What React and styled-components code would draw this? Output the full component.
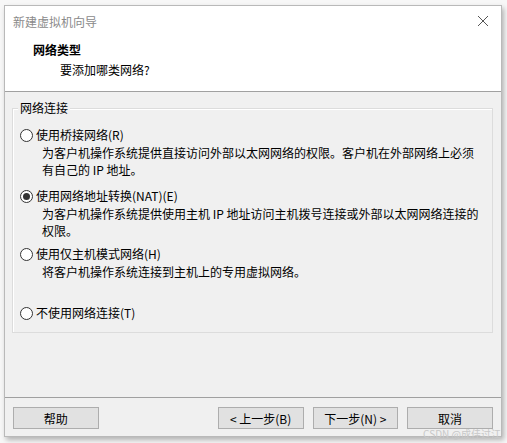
import React from "react";
import styled, { createGlobalStyle } from "styled-components";

const Global = createGlobalStyle`
  html, body { margin: 0; padding: 0; background: #f7f7f7; }
  body { font-family: "Microsoft YaHei", "Noto Sans CJK SC", "Noto Sans", sans-serif; font-size: 12px; color: #000; }
  * { box-sizing: border-box; }
`;

const Page = styled.div`
  width: 507px;
  height: 443px;
  padding: 5px 5px 0 4px;
  position: relative;
  overflow: hidden;
`;

const Window = styled.div`
  width: 498px;
  height: 432px;
  border: 1px solid #b9b9b9;
  background: #f0f0f0;
  box-shadow: 2px 3px 5px rgba(0,0,0,0.28);
  display: flex;
  flex-direction: column;
`;

const TopArea = styled.div`
  background: #fff;
  height: 86px;
  border-bottom: 1px solid #a0a0a0;
  display: flex;
  flex-direction: column;
`;

const TitleBar = styled.div`
  height: 30px;
  display: flex;
  align-items: center;
  justify-content: space-between;
  padding: 0 12px 0 8px;
`;

const Title = styled.span`
  color: #8a8a8a;
  font-size: 12px;
`;

const Close = styled.svg`
  width: 12px;
  height: 12px;
`;

const Header = styled.div`
  padding: 5px 0 0 28px;
  display: flex;
  flex-direction: column;
  gap: 2px;
`;

const HeaderTitle = styled.div`
  font-weight: bold;
  font-size: 12px;
  line-height: 18px;
`;

const HeaderSub = styled.div`
  padding-left: 27px;
  line-height: 18px;
`;

const Body = styled.div`
  padding: 16px 8px 0 7px;
  display: flex;
  flex-direction: column;
`;

const Group = styled.fieldset`
  margin: 0;
  padding: 0 0 0 8px;
  height: 225px;
  border: none;
  box-shadow: inset 0 0 0 1px #dcdcdc, inset 1px 1px 0 1px #fff;
  position: relative;
`;

const Legend = styled.div`
  position: absolute;
  top: -9px;
  left: 6px;
  padding: 0 2px;
  background: #f0f0f0;
  line-height: 18px;
`;

const Options = styled.div`
  padding-top: 18px;
  display: flex;
  flex-direction: column;
`;

const Option = styled.div`
  display: flex;
  flex-direction: column;
  margin-bottom: ${p => p.$mb}px;
`;

const RadioRow = styled.label`
  display: flex;
  align-items: center;
  gap: 3px;
  line-height: 18px;
`;

const Radio = styled.span`
  width: 13px;
  height: 13px;
  border-radius: 50%;
  border: 1px solid #333;
  background: #fff;
  display: flex;
  align-items: center;
  justify-content: center;
  &::after {
    content: "";
    width: 7px;
    height: 7px;
    border-radius: 50%;
    background: ${p => (p.$checked ? "#333" : "transparent")};
  }
`;

const Desc = styled.div`
  padding-left: 22px;
  line-height: 17px;
  width: 460px;
`;

const Footer = styled.div`
  margin-top: 64px;
  border-top: 1px solid #a0a0a0;
  padding: 9px 8px 0 8px;
  display: flex;
`;

const Button = styled.div`
  width: 86px;
  height: 22px;
  border: 1px solid #adadad;
  background: #e1e1e1;
  display: flex;
  align-items: center;
  justify-content: center;
  margin-left: ${p => p.$ml || 0}px;
`;

const Watermark = styled.div`
  position: absolute;
  right: 6px;
  bottom: 4px;
  color: #c8c8c8;
  font-size: 10px;
  line-height: 11px;
`;

export default function App() {
  return (
    <>
      <Global />
      <Page>
        <Window>
          <TopArea>
            <TitleBar>
              <Title>新建虚拟机向导</Title>
              <Close viewBox="0 0 12 12">
                <path d="M1 1L11 11M11 1L1 11" stroke="#555" strokeWidth="1" />
              </Close>
            </TitleBar>
            <Header>
              <HeaderTitle>网络类型</HeaderTitle>
              <HeaderSub>要添加哪类网络?</HeaderSub>
            </Header>
          </TopArea>
          <Body>
            <Group>
              <Legend>网络连接</Legend>
              <Options>
                <Option $mb={9}>
                  <RadioRow><Radio />使用桥接网络(R)</RadioRow>
                  <Desc>为客户机操作系统提供直接访问外部以太网网络的权限。客户机在外部网络上必须有自己的 IP 地址。</Desc>
                </Option>
                <Option $mb={6}>
                  <RadioRow><Radio $checked />使用网络地址转换(NAT)(E)</RadioRow>
                  <Desc>为客户机操作系统提供使用主机 IP 地址访问主机拨号连接或外部以太网网络连接的权限。</Desc>
                </Option>
                <Option $mb={24}>
                  <RadioRow><Radio />使用仅主机模式网络(H)</RadioRow>
                  <Desc>将客户机操作系统连接到主机上的专用虚拟网络。</Desc>
                </Option>
                <Option $mb={0}>
                  <RadioRow><Radio />不使用网络连接(T)</RadioRow>
                </Option>
              </Options>
            </Group>
          </Body>
          <Footer>
            <Button>帮助</Button>
            <Button $ml={119}>&lt; 上一步(B)</Button>
            <Button $ml={9}>下一步(N) &gt;</Button>
            <Button $ml={9}>取消</Button>
          </Footer>
        </Window>
        <Watermark>CSDN @成佳过江</Watermark>
      </Page>
    </>
  );
}
